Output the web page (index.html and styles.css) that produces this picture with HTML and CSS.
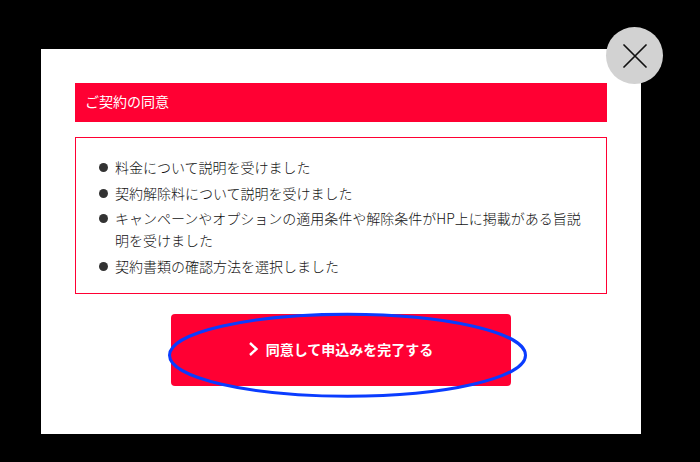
FILE: index.html
```html
<!DOCTYPE html>
<html lang="ja">
<head>
    <meta charset="UTF-8">
    <meta name="viewport" content="width=device-width, initial-scale=1.0">
    <title>ご契約の同意</title>
    <link rel="stylesheet" href="styles.css">
</head>
<body>
    <div class="modal">
        <button class="close" type="button" aria-label="閉じる">
            <svg width="24" height="24" viewBox="0 0 24 24">
                <path d="M1 1L23 23M23 1L1 23" stroke="#111" stroke-width="1.7" stroke-linecap="round" fill="none"/>
            </svg>
        </button>

        <h2 class="modal-title">ご契約の同意</h2>

        <ul class="agree-list">
            <li>料金について説明を受けました</li>
            <li>契約解除料について説明を受けました</li>
            <li>キャンペーンやオプションの適用条件や解除条件がHP上に掲載がある旨説明を受けました</li>
            <li>契約書類の確認方法を選択しました</li>
        </ul>

        <div class="submit-wrap">
            <a class="submit" href="#">
                <svg class="chevron" width="10" height="14" viewBox="0 0 10 14">
                    <path d="M1 1L7.5 7L1 13" stroke="#fff" stroke-width="2.4" fill="none"/>
                </svg>
                同意して申込みを完了する
            </a>
            <svg class="mark" width="364" height="90" viewBox="0 0 364 90">
                <ellipse cx="180.5" cy="44.2" rx="178" ry="41" stroke="#0a3cff" stroke-width="3" fill="none"/>
            </svg>
        </div>
    </div>
</body>
</html>
```

FILE: styles.css
```css
html, body {
    margin: 0;
    height: 100%;
    background-color: #000;
}
body {
    padding: 49px 59px 28px 41px;
    box-sizing: border-box;
    font-family: "Noto Sans CJK JP", "Liberation Sans", sans-serif;
    color: #333;
    overflow: hidden;
}
.modal {
    position: relative;
    width: 600px;
    height: 385px;
    padding: 34px;
    box-sizing: border-box;
    background-color: white;
}
.close {
    position: absolute;
    top: -22px;
    left: 565px;
    display: flex;
    align-items: center;
    justify-content: center;
    width: 57px;
    height: 57px;
    padding: 0;
    border: 0;
    border-radius: 50%;
    background-color: #d2d2d2;
}
.modal-title {
    margin: 0 0 15px;
    padding: 0 10px;
    height: 39px;
    line-height: 36px;
    font-size: 14px;
    font-weight: 400;
    color: white;
    background-color: #f03;
}
.agree-list {
    margin: 0;
    height: 157px;
    padding: 18px 23px 0;
    box-sizing: border-box;
    list-style: none;
    border: 1px solid #f03;
}
.agree-list li {
    position: relative;
    margin-bottom: 3.6px;
    padding-left: 16px;
    font-size: 14px;
    font-weight: 300;
    line-height: 22px;
    color: #111;
}
.agree-list li::before {
    content: "";
    position: absolute;
    top: 7px;
    left: 0;
    width: 9px;
    height: 9px;
    border-radius: 50%;
    background-color: #333;
}
.submit-wrap {
    position: relative;
    display: flex;
    justify-content: center;
    margin-top: 20px;
}
.submit {
    display: flex;
    align-items: center;
    justify-content: center;
    gap: 7px;
    width: 340px;
    height: 72px;
    padding-bottom: 2px;
    box-sizing: border-box;
    border-radius: 4px;
    font-size: 14px;
    font-weight: bold;
    text-decoration: none;
    color: white;
    background-color: #f03;
}
.mark {
    position: absolute;
    top: -3px;
    left: 92px;
}
```
